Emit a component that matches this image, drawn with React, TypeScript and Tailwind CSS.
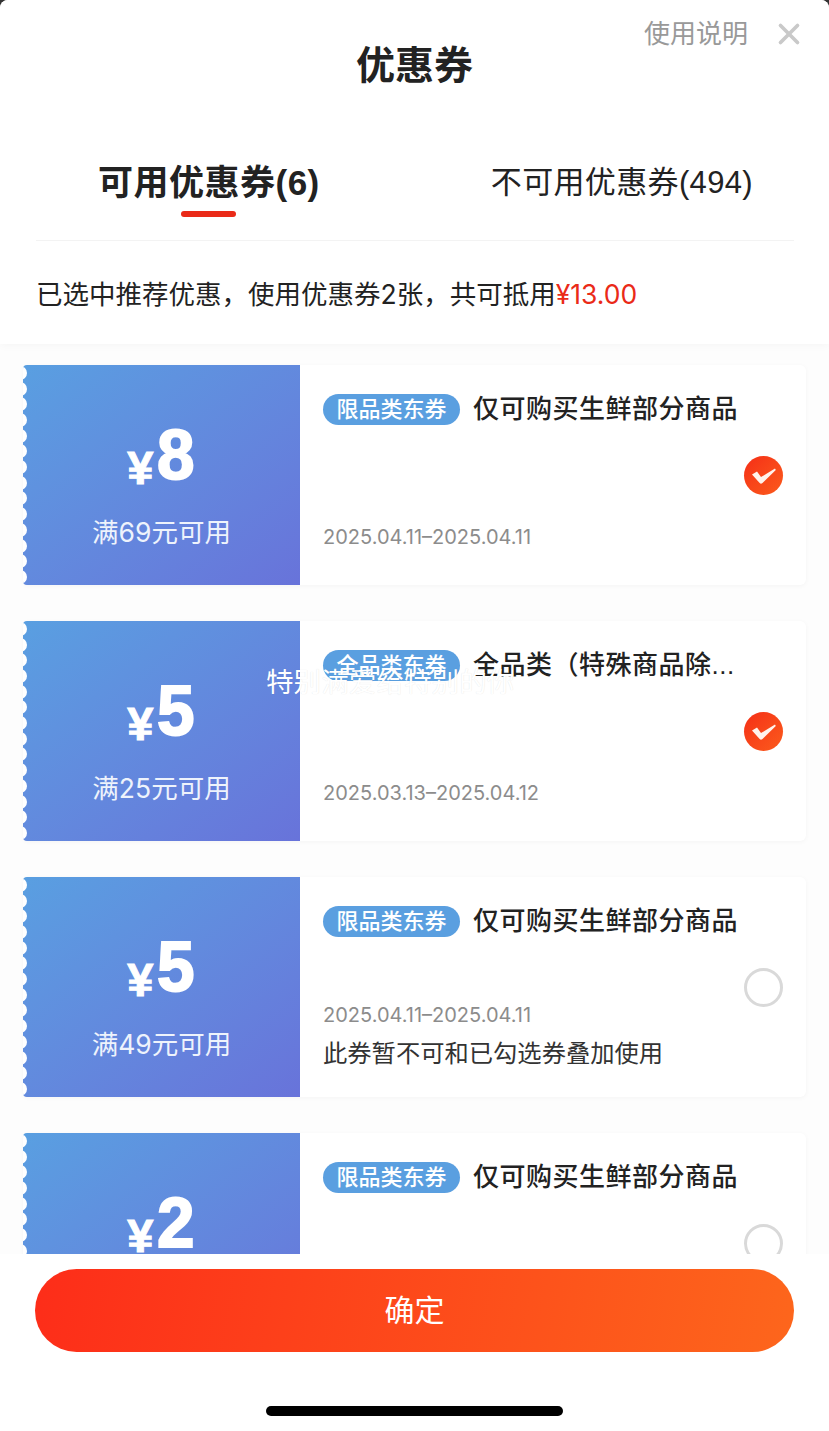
import { X } from "lucide-react";

const coupons = [
  { amount: "8", limit: "满69元可用", tag: "限品类东券", title: "仅可购买生鲜部分商品", date: "2025.04.11–2025.04.11", checked: true },
  { amount: "5", limit: "满25元可用", tag: "全品类东券", title: "全品类（特殊商品除...", date: "2025.03.13–2025.04.12", checked: true },
  { amount: "5", limit: "满49元可用", tag: "限品类东券", title: "仅可购买生鲜部分商品", date: "2025.04.11–2025.04.11", checked: false, note: "此券暂不可和已勾选券叠加使用" },
  { amount: "2", limit: "满29元可用", tag: "限品类东券", title: "仅可购买生鲜部分商品", date: "2025.04.11–2025.04.11", checked: false },
];

type Coupon = (typeof coupons)[number] & { note?: string };

const CheckMark = ({ checked }: { checked: boolean }) => {
  if (!checked) {
    return <div className="w-[39px] h-[39px] rounded-full border-[3px] border-[#d9d9d9]" />;
  }
  return (
    <div className="w-[39px] h-[39px] rounded-full bg-gradient-to-br from-[#f52c17] to-[#fb5a1c]">
      <svg width="39" height="39" viewBox="0 0 39 39">
        <path d="M8 18.5 L13 15.5 L17 21 L31 12.5 L31.8 14 L18.5 27 Q16.5 28.5 15.2 26.5 Z" fill="#fff3ec" />
      </svg>
    </div>
  );
};

const Scallops = () => (
  <div className="absolute left-[-10px] top-0 h-full flex flex-col justify-around">
    {Array.from({ length: 14 }, (_, i) => (
      <span key={i} className="block w-[14px] h-[14px] rounded-full bg-white" />
    ))}
  </div>
);

const CouponCard = ({ coupon }: { coupon: Coupon }) => (
  <div className="flex h-[220px] shrink-0 bg-white rounded-[6px] shadow-[0_1px_5px_rgba(0,0,0,0.04)]">
    <div className="relative w-[277px] shrink-0 overflow-hidden rounded-tl-[4px] rounded-bl-[4px] bg-gradient-to-br from-[#599fe1] to-[#6873da] flex flex-col items-center text-white">
      <Scallops />
      <div className="flex items-end mt-[57px] h-[66px] font-['Liberation_Sans']">
        <span className="text-[47px] leading-[47px] font-bold mr-[3px] mb-[-3px] [-webkit-text-stroke:1px_white]">¥</span>
        <span className="text-[71px] leading-[66px] font-bold scale-x-95 [-webkit-text-stroke:2px_white]">{coupon.amount}</span>
      </div>
      <div className="text-[26.5px] leading-[32px] mt-[28px] text-[#eef3fc]">{coupon.limit}</div>
    </div>
    <div className="flex-1 flex items-center pl-[23px] pr-[23px] min-w-0">
      <div className="flex-1 h-full flex flex-col min-w-0">
        <div className="flex items-center mt-[27px] h-[34px] font-['Liberation_Sans','Noto_Sans_CJK_SC',sans-serif]">
          <span className="h-[31px] w-[137px] rounded-full bg-[#5a9fe0] text-white text-[22px] font-medium leading-[31px] text-center whitespace-nowrap">
            {coupon.tag}
          </span>
          <span className="ml-[13px] text-[26px] leading-[34px] font-medium text-[#222] whitespace-nowrap tracking-[0.5px]">
            {coupon.title}
          </span>
        </div>
        <div className={`text-[20px] leading-[28px] text-[#8c8c8c] ${coupon.note ? "mt-[63px]" : "mt-[97px]"}`}>
          {coupon.date}
        </div>
        {coupon.note && <div className="text-[24.3px] leading-[34px] mt-[7px] text-[#333] whitespace-nowrap">{coupon.note}</div>}
      </div>
      <CheckMark checked={coupon.checked} />
    </div>
  </div>
);

export default function App() {
  return (
    <div className="relative h-[1431px] w-[829px] overflow-hidden bg-[#333] font-['Inter','Noto_Sans_CJK_SC',sans-serif]">
      <div className="h-full flex flex-col bg-white rounded-t-[8px] overflow-hidden">
        <div className="relative z-10 h-[344px] shrink-0 bg-white shadow-[0_2px_8px_rgba(0,0,0,0.03)]">
          <div className="h-[130px] flex items-center justify-center text-[39px] font-bold text-[#222]">优惠券</div>
          <div className="absolute right-[23px] top-[14px] flex items-center gap-[24px] text-[#999]">
            <span className="text-[26px] leading-[40px]">使用说明</span>
            <X size={34} strokeWidth={2.6} className="text-[#c9c9c9]" />
          </div>
          <div className="ml-[36px] mr-[35px] pl-[62px] pr-[41px] pt-[31px] pb-[23px] flex justify-between items-start border-b border-[#f3f3f3] font-['Liberation_Sans','Noto_Sans_CJK_SC',sans-serif]">
            <div className="flex flex-col items-center">
              <span className="text-[35px] leading-[44px] font-bold text-[#222] tracking-[0.5px]">可用优惠券(6)</span>
              <span className="w-[55px] h-[6px] mt-[6px] rounded-full bg-[#ea2a18]" />
            </div>
            <span className="text-[31px] leading-[44px] text-[#222] tracking-[0.35px]">不可用优惠券(494)</span>
          </div>
          <div className="h-[102px] pt-[6px] flex items-center px-[36px] text-[26.5px] text-[#222]">
            已选中推荐优惠，使用优惠券2张，共可抵用
            <span className="text-[#ea2a18]">¥13.00</span>
          </div>
        </div>

        <div className="flex-1 min-h-0 overflow-hidden bg-[#fdfdfd] pt-[21px] pl-[23px] pr-[23px] flex flex-col gap-[36px]">
          {coupons.map((c, i) => (
            <CouponCard key={i} coupon={c} />
          ))}
        </div>

        <div className="relative z-10 h-[177px] shrink-0 bg-white flex flex-col items-center">
          <button className="mt-[15px] w-[759px] h-[83px] rounded-full bg-[linear-gradient(100deg,#fd2d19,#fd661c)] text-white text-[30px]">
            确定
          </button>
          <div className="mt-[54px] w-[297px] h-[10px] rounded-full bg-black" />
        </div>
      </div>
      <div className="absolute left-[266px] top-[663px] text-[27.6px] leading-[38px] text-white whitespace-nowrap [text-shadow:0_0_1px_rgba(0,0,0,0.12)]">
        特别满爱给特别的你
      </div>
    </div>
  );
}
